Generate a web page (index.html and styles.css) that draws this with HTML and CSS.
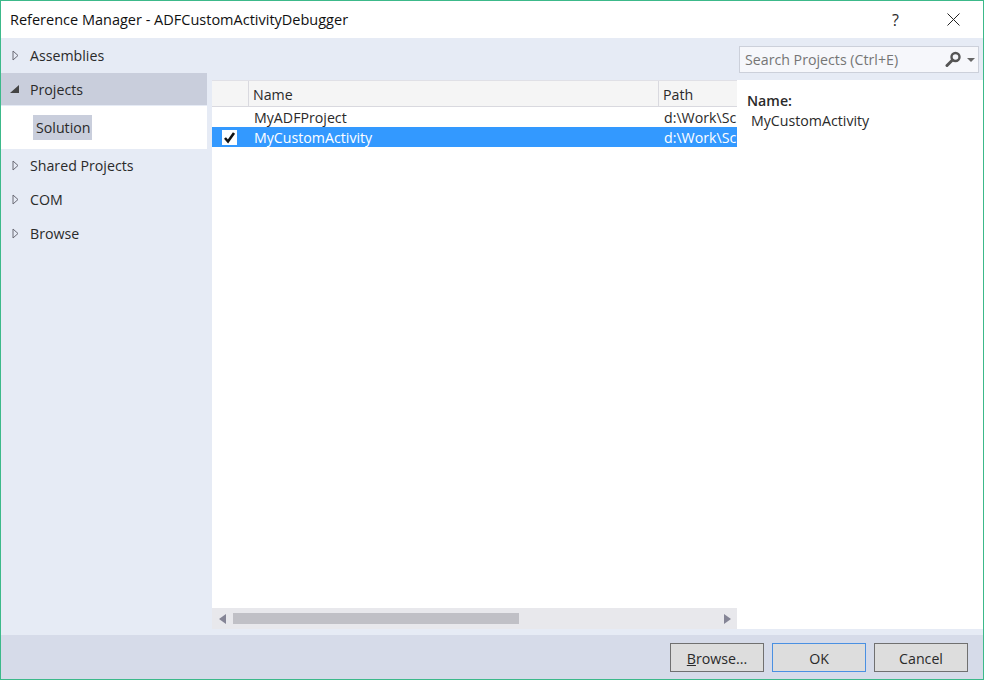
FILE: index.html
```html
<!DOCTYPE html>
<html>
<head>
  <title>Reference Manager - ADFCustomActivityDebugger</title>
  <link rel="stylesheet" href="styles.css">
</head>
<body>
  <div class="window">
    <div class="titlebar">
      <span class="title">Reference Manager - ADFCustomActivityDebugger</span>
      <span class="help">?</span>
      <svg class="close" width="13" height="13" viewBox="0 0 13 13"><path d="M0.5 0.5L12.5 12.5M12.5 0.5L0.5 12.5" stroke="#222" stroke-width="1" fill="none"/></svg>
    </div>
    <div class="main">
      <div class="tree">
        <div class="tree-item first"><svg class="arrow" width="7" height="11" viewBox="0 0 7 11"><path d="M1 1L6 5.5L1 10Z" fill="none" stroke="#6a6a75"/></svg>Assemblies</div>
        <div class="tree-item open"><svg class="arrow" width="10" height="9" viewBox="0 0 10 9"><path d="M9 0V8H0Z" fill="#444"/></svg>Projects</div>
        <div class="tree-sub"><span class="chip">Solution</span></div>
        <div class="tree-item"><svg class="arrow" width="7" height="11" viewBox="0 0 7 11"><path d="M1 1L6 5.5L1 10Z" fill="none" stroke="#6a6a75"/></svg>Shared Projects</div>
        <div class="tree-item"><svg class="arrow" width="7" height="11" viewBox="0 0 7 11"><path d="M1 1L6 5.5L1 10Z" fill="none" stroke="#6a6a75"/></svg>COM</div>
        <div class="tree-item"><svg class="arrow" width="7" height="11" viewBox="0 0 7 11"><path d="M1 1L6 5.5L1 10Z" fill="none" stroke="#6a6a75"/></svg>Browse</div>
      </div>
      <div class="content">
        <div class="search-row">
          <div class="search">
            <span class="search-text">Search Projects (Ctrl+E)</span>
            <svg class="search-icon" width="17" height="17" viewBox="0 0 17 17"><circle cx="10.5" cy="6" r="4" fill="none" stroke="#555" stroke-width="2.4"/><path d="M7.5 9L2 14.5" stroke="#555" stroke-width="3" stroke-linecap="round"/></svg>
            <span class="caret"></span>
          </div>
        </div>
        <div class="panes">
          <div class="list">
            <div class="table">
              <div class="row head">
                <div class="col-check"></div>
                <div class="col-name">Name</div>
                <div class="col-path">Path</div>
              </div>
              <div class="row">
                <div class="col-check"></div>
                <div class="col-name">MyADFProject</div>
                <div class="col-path">d:\Work\Sc</div>
              </div>
              <div class="row selected">
                <div class="col-check"><svg class="checkbox" width="15" height="15" viewBox="0 0 15 15"><rect width="15" height="15" fill="#fff"/><path d="M3 8L6 11.5L12 3" fill="none" stroke="#111" stroke-width="2.6"/></svg></div>
                <div class="col-name">MyCustomActivity</div>
                <div class="col-path">d:\Work\Sc</div>
              </div>
            </div>
            <div class="hscroll">
              <span class="sb-left"></span>
              <div class="sb-track"><div class="sb-thumb"></div></div>
              <span class="sb-right"></span>
            </div>
          </div>
          <div class="details">
            <div class="details-label">Name:</div>
            <div class="details-value">MyCustomActivity</div>
          </div>
        </div>
      </div>
    </div>
    <div class="footer">
      <button class="btn"><u>B</u>rowse...</button>
      <button class="btn default">OK</button>
      <button class="btn">Cancel</button>
    </div>
  </div>
</body>
</html>
```
FILE: styles.css
```css
html, body {
  margin: 0;
  padding: 0;
}
body {
  font-family: "Open Sans", "Noto Sans", sans-serif;
  font-size: 14.2px;
  color: #2a2a2a;
}
.window {
  width: 984px;
  height: 680px;
  box-sizing: border-box;
  border: 1px solid #3cb98a;
  display: flex;
  flex-direction: column;
  background: #e6ebf5;
  overflow: hidden;
}
.titlebar {
  height: 37px;
  flex: none;
  background: #fff;
  display: flex;
  align-items: center;
  padding-left: 9px;
}
.title {
  flex: 1;
  color: #111;
  font-size: 14.5px;
}
.help {
  font-size: 16px;
  margin-right: 48px;
}
.close {
  margin-right: 23px;
}
.main {
  flex: 1;
  display: flex;
  min-height: 0;
}
.tree {
  width: 206px;
  flex: none;
  margin-right: 5px;
}
.tree-item {
  height: 34px;
  display: flex;
  align-items: center;
  padding-left: 29px;
  position: relative;
}
.tree-item.first {
  height: 35px;
}
.arrow {
  position: absolute;
  left: 11px;
  top: 12px;
}
.tree-item.open {
  background: #c9cedc;
  height: 32px;
  margin-bottom: 1px;
}
.tree-item.open .arrow {
  left: 9px;
}
.tree-sub {
  background: #fff;
  height: 43px;
  margin-bottom: -1px;
  display: flex;
  align-items: center;
  padding-left: 32px;
}
.chip {
  background: #c9cedc;
  padding: 0 2px 0 3px;
  height: 25px;
  line-height: 26px;
}
.content {
  flex: 1;
  display: flex;
  flex-direction: column;
  min-width: 0;
}
.search-row {
  height: 42px;
  flex: none;
  display: flex;
  justify-content: flex-end;
  align-items: flex-start;
  padding-top: 8px;
  box-sizing: border-box;
}
.search {
  width: 240px;
  height: 27px;
  box-sizing: border-box;
  margin-right: 4px;
  border: 1px solid #ccd0da;
  background: #f6f7fb;
  display: flex;
  align-items: center;
  padding-left: 5px;
}
.search-text {
  flex: 1;
  color: #757575;
  line-height: 26px;
}
.search-icon {
  margin-right: 5px;
}
.caret {
  width: 0;
  height: 0;
  border-left: 4px solid transparent;
  border-right: 4px solid transparent;
  border-top: 4px solid #666;
  margin-right: 3px;
}
.panes {
  flex: 1;
  display: flex;
  min-height: 0;
  padding-bottom: 6px;
}
.list {
  width: 525px;
  flex: none;
  display: flex;
  flex-direction: column;
  background: #fff;
  overflow: hidden;
}
.table {
  flex: 1;
}
.row {
  display: flex;
  height: 20px;
  line-height: 21px;
}
.row.head {
  height: 27px;
  line-height: 28px;
  box-sizing: border-box;
  background: #f5f5f5;
  border-top: 1px solid #e0e0e6;
  border-bottom: 1px solid #d9d9df;
}
.row.selected {
  background: #3399ff;
  color: #fff;
}
.col-check {
  width: 36px;
  flex: none;
  display: flex;
  align-items: center;
  padding-left: 10px;
  box-sizing: border-box;
}
.col-name {
  width: 410px;
  flex: none;
  padding-left: 6px;
  box-sizing: border-box;
}
.col-path {
  flex: 1;
  padding-left: 6px;
  white-space: nowrap;
  overflow: hidden;
}
.head .col-name,
.head .col-path {
  border-left: 1px solid #d9d9df;
  padding-left: 4px;
}
.hscroll {
  height: 21px;
  flex: none;
  background: #e8e8ec;
  display: flex;
  align-items: center;
}
.sb-left {
  width: 0;
  height: 0;
  margin-left: 7px;
  border-top: 5px solid transparent;
  border-bottom: 5px solid transparent;
  border-right: 7px solid #858596;
}
.sb-right {
  width: 0;
  height: 0;
  margin-right: 6px;
  border-top: 5px solid transparent;
  border-bottom: 5px solid transparent;
  border-left: 7px solid #858596;
}
.sb-track {
  flex: 1;
  padding: 0 6px 0 7px;
}
.sb-thumb {
  width: 286px;
  height: 11px;
  background: #c0c0c6;
}
.details {
  flex: 1;
  background: #fff;
  padding: 11px 10px;
}
.details-label {
  font-weight: 600;
  line-height: 20px;
}
.details-value {
  line-height: 20px;
  padding-left: 4px;
}
.footer {
  height: 44px;
  flex: none;
  background: #d6dbe9;
  display: flex;
  justify-content: flex-end;
  align-items: flex-start;
  gap: 8px;
  padding: 8px 15px 0 0;
  box-sizing: border-box;
}
.btn {
  width: 94px;
  height: 29px;
  padding: 2px 0 0;
  background: #dddddd;
  border: 1px solid #707070;
  font-family: inherit;
  font-size: 14.2px;
  color: #2a2a2a;
}
.btn.default {
  border-color: #4a90e2;
}
```
